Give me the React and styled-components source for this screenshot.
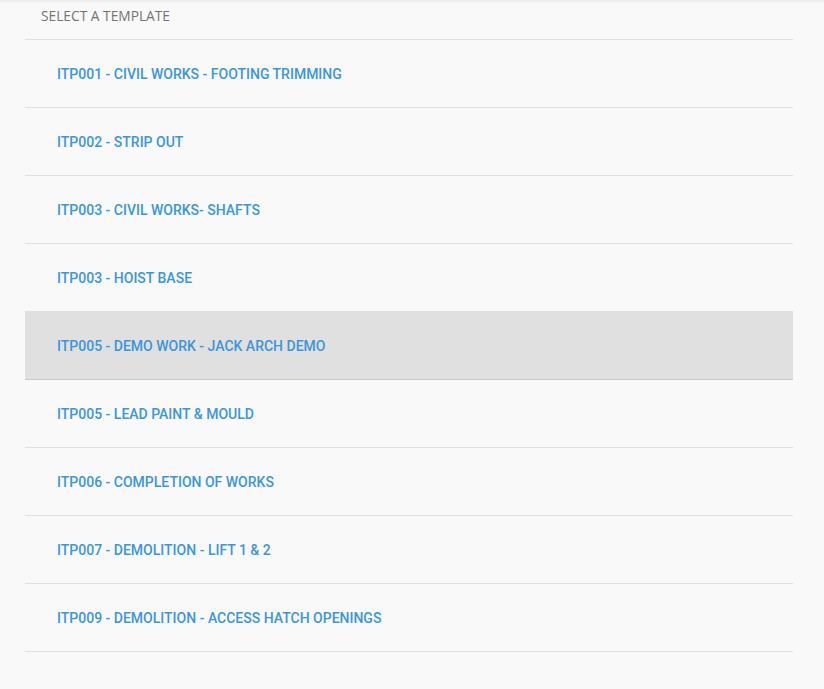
import React from "react";
import styled, { createGlobalStyle } from "styled-components";

const Global = createGlobalStyle`
  html, body { margin: 0; padding: 0; background: #f9f9f9; }
  body { font-family: Roboto, "Open Sans", sans-serif; }
`;

const Page = styled.div`
  min-height: 689px;
  background: #f9f9f9;
  box-shadow: inset 0 3px 3px -2px rgba(0, 0, 0, 0.08);
  padding-left: 25px;
  box-sizing: border-box;
`;

const Panel = styled.div`
  width: 768px;
`;

const Header = styled.div`
  height: 40px;
  box-sizing: border-box;
  padding: 7px 0 0 16px;
  line-height: 18px;
  border-bottom: 1px solid #e0e0e0;
  font-family: "Open Sans", sans-serif;
  font-size: 13.75px;
  color: #737373;
`;

const List = styled.ul`
  list-style: none;
  margin: 0;
  padding: 0;
`;

const Row = styled.li`
  box-sizing: border-box;
  display: flex;
  align-items: center;
  height: 68px;
  padding: ${(p) => (p.$active ? "1px" : "0")} 0 0 32px;
  border-bottom: 1px solid ${(p) => (p.$active ? "#c9c9c9" : "#e0e0e0")};
  background: ${(p) => (p.$active ? "#e0e0e0" : "transparent")};
  font-family: Roboto, sans-serif;
  font-weight: 500;
  font-size: 14px;
  color: #3b96dc;
  cursor: pointer;
`;

const items = [
  "ITP001 - CIVIL WORKS - FOOTING TRIMMING",
  "ITP002 - STRIP OUT",
  "ITP003 - CIVIL WORKS- SHAFTS",
  "ITP003 - HOIST BASE",
  "ITP005 - DEMO WORK - JACK ARCH DEMO",
  "ITP005 - LEAD PAINT & MOULD",
  "ITP006 - COMPLETION OF WORKS",
  "ITP007 - DEMOLITION - LIFT 1 & 2",
  "ITP009 - DEMOLITION - ACCESS HATCH OPENINGS",
];

export default function App() {
  return (
    <>
      <Global />
      <Page>
        <Panel>
          <Header>SELECT A TEMPLATE</Header>
          <List>
            {items.map((t, i) => (
              <Row key={i} $active={i === 4}>
                {t}
              </Row>
            ))}
          </List>
        </Panel>
      </Page>
    </>
  );
}
